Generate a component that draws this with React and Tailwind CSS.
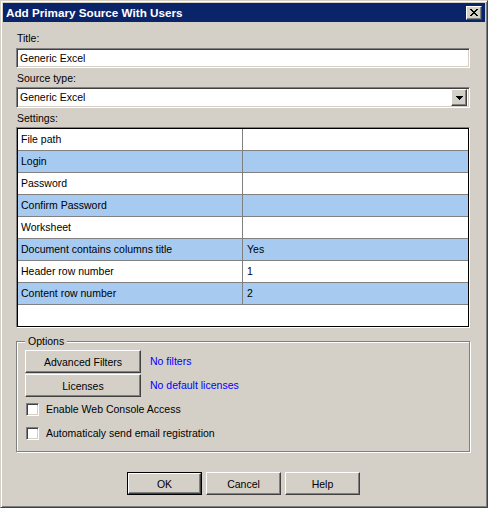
import React from 'react';

const rows = [
    ['File path', ''],
    ['Login', ''],
    ['Password', ''],
    ['Confirm Password', ''],
    ['Worksheet', ''],
    ['Document contains columns title', 'Yes'],
    ['Header row number', '1'],
    ['Content row number', '2'],
];

// classic raised bevel
const raised = 'border border-t-white border-l-white border-b-[#404040] border-r-[#404040] shadow-[inset_-1px_-1px_#808080] bg-[#d4d0c8]';
// classic sunken field
const sunken = 'border border-t-[#808080] border-l-[#808080] border-b-white border-r-white shadow-[inset_1px_1px_#404040,inset_-1px_-1px_#d4d0c8] bg-white';

const Button = ({ children, isDefault, className = '' }) => {
    if (isDefault) {
        return (
            <div className={`border border-black ${className}`}>
                <div className={`${raised} w-full h-full flex items-center justify-center text-[10.5px] leading-none pt-[1px]`}>{children}</div>
            </div>
        );
    }
    return (
        <div className={`${raised} flex items-center justify-center text-[10.5px] leading-none pt-[1px] ${className}`}>{children}</div>
    );
};

const Checkbox = ({ label }) => (
    <div className="h-[24px] flex items-center pl-[1px]">
        <div className={`${sunken} w-[13px] h-[13px]`}></div>
        <span className="ml-[7px] text-[10.5px] leading-[13px] pt-[1px]">{label}</span>
    </div>
);

const Label = ({ children, className = '' }) => (
    <div className={`h-[13px] text-[10.5px] leading-[13px] pl-[1px] pt-[1px] ${className}`}>{children}</div>
);

export default function App() {
    return (
        <div className="w-[488px] h-[508px] bg-[#d4d0c8] border border-t-[#d4d0c8] border-l-[#d4d0c8] border-b-[#404040] border-r-[#404040] shadow-[inset_1px_1px_white,inset_-1px_-1px_#808080] p-[2px] text-black font-['Liberation_Sans',Arial,sans-serif] flex flex-col">
            {/* Title bar */}
            <div className="h-[19px] bg-[#0a246a] flex items-center justify-between pl-[3px] pr-[3px]">
                <span className="text-white font-bold text-[11.7px] leading-none">Add Primary Source With Users</span>
                <div className={`${raised} w-[16px] h-[14px] flex items-center justify-center`}>
                    <svg width="8" height="7" viewBox="0 0 8 7" shapeRendering="crispEdges">
                        <path d="M0 0h2v1h-2zM6 0h2v1h-2zM1 1h2v1h-2zM5 1h2v1h-2zM2 2h4v1h-4zM3 3h2v1h-2zM2 4h4v1h-4zM1 5h2v1h-2zM5 5h2v1h-2zM0 6h2v1h-2zM6 6h2v1h-2z" fill="black" />
                    </svg>
                </div>
            </div>

            <div className="flex flex-col pl-[13px] pr-[15px]">
                <Label className="mt-[9px]">Title:</Label>
                <div className={`${sunken} mt-[4px] h-[20px] flex items-center pl-[3px] pt-[1px] text-[10.5px]`}>Generic Excel</div>

                <Label className="mt-[3px]">Source type:</Label>
                <div className={`${sunken} mt-[3px] h-[21px] flex items-center justify-between pl-[3px] pr-[2px] text-[10.5px]`}>
                    <span className="pt-[1px]">Generic Excel</span>
                    <div className={`${raised} w-[16px] h-[17px] flex items-center justify-center`}>
                        <svg width="7" height="4" viewBox="0 0 7 4" shapeRendering="crispEdges">
                            <path d="M0 0h7v1h-7zM1 1h5v1h-5zM2 2h3v1h-3zM3 3h1v1h-1z" fill="black" />
                        </svg>
                    </div>
                </div>

                <Label className="mt-[3px]">Settings:</Label>
                <div className="mt-[3px] h-[201px] bg-white border border-t-[#808080] border-l-[#808080] border-b-white border-r-white shadow-[inset_1px_1px_#000,inset_-1px_-1px_#000] p-[1px]">
                    {rows.map(([name, value], i) => (
                        <div key={name} className={`h-[22px] flex border-b border-[#808080] text-[10.5px] ${i % 2 === 1 ? 'bg-[#a6caf0]' : 'bg-white'}`}>
                            <div className="w-[225px] border-r border-[#808080] flex items-center pl-[3px] pt-[1px]">{name}</div>
                            <div className="flex-1 flex items-center pl-[4px] pt-[1px]">{value}</div>
                        </div>
                    ))}
                </div>

                {/* Options group */}
                <div className="relative mt-[13px] h-[111px] border border-[#808080] shadow-[inset_1px_1px_white,1px_1px_white] pt-[8px] pl-[8px]">
                    <span className="absolute -top-[7px] left-[8px] px-[3px] bg-[#d4d0c8] text-[10.5px] leading-[13px]">Options</span>
                    <div className="flex items-center">
                        <Button className="w-[116px] h-[23px]">Advanced Filters</Button>
                        <span className="ml-[9px] text-[10.5px] text-[#0000ff] pt-[1px]">No filters</span>
                    </div>
                    <div className="flex items-center mt-[1px]">
                        <Button className="w-[116px] h-[23px]">Licenses</Button>
                        <span className="ml-[9px] text-[10.5px] text-[#0000ff] pt-[1px]">No default licenses</span>
                    </div>
                    <Checkbox label="Enable Web Console Access" />
                    <Checkbox label="Automaticaly send email registration" />
                </div>
            </div>

            {/* Dialog buttons */}
            <div className="mt-[20px] flex justify-center gap-[4px] pr-[1px]">
                <Button isDefault className="w-[75px] h-[23px]">OK</Button>
                <Button className="w-[75px] h-[23px]">Cancel</Button>
                <Button className="w-[75px] h-[23px]">Help</Button>
            </div>
        </div>
    );
}
